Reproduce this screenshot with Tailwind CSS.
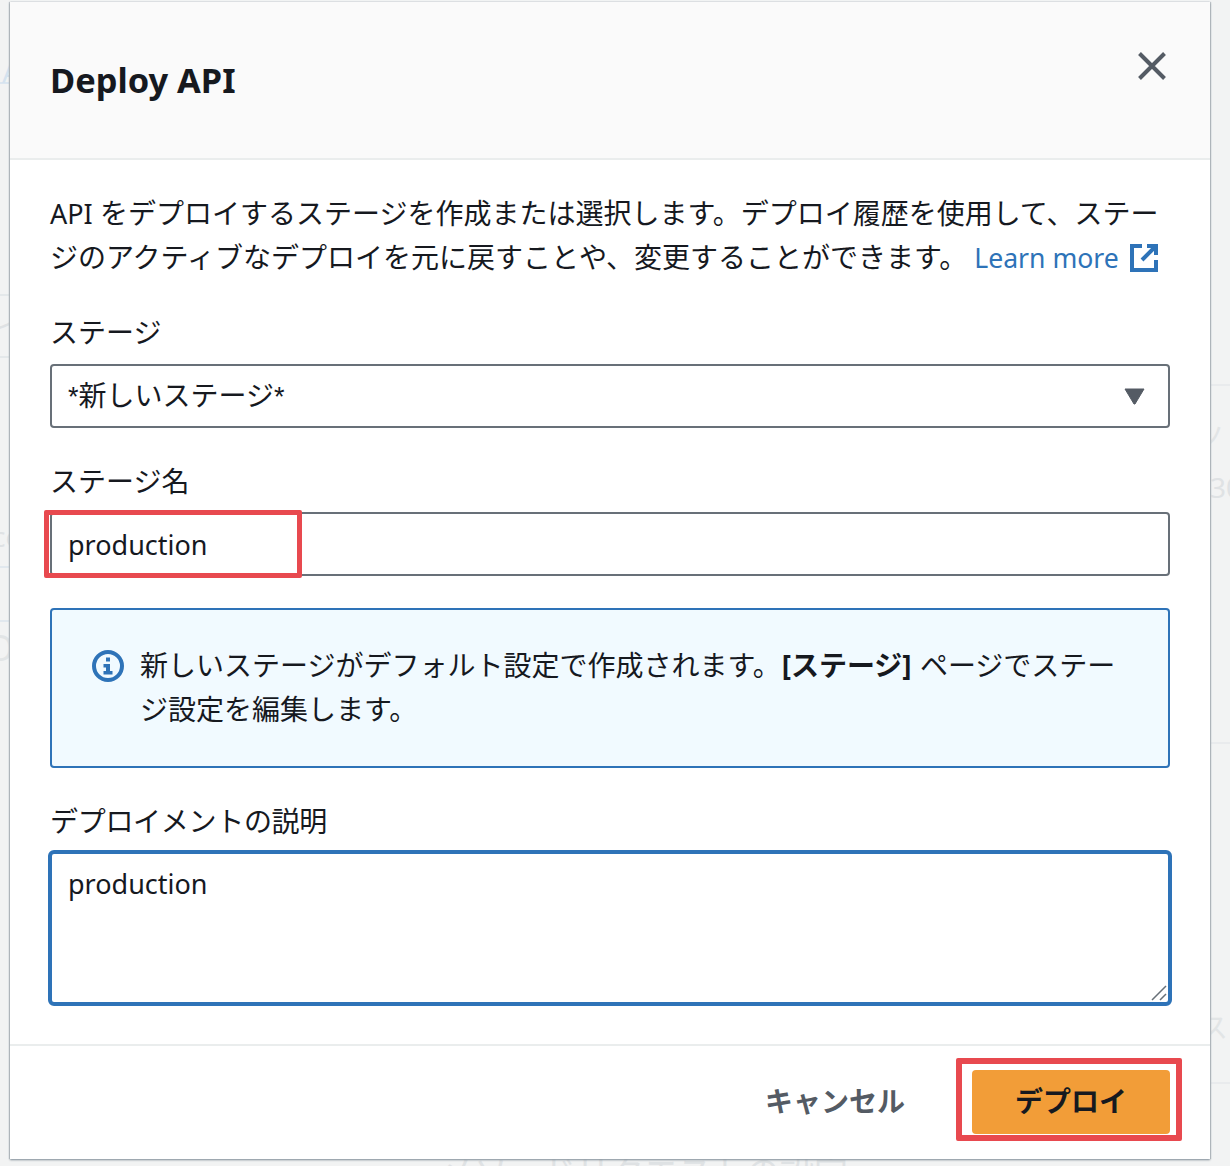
<!DOCTYPE html>
<html lang="ja">
<head>
  <meta charset="UTF-8">
  <title>Deploy API</title>
  <script src="https://cdn.jsdelivr.net/npm/@tailwindcss/browser@4"></script>
</head>
<body class="relative w-[1230px] h-[1166px] overflow-hidden bg-[#f2f3f3] font-['Noto_Sans','Noto_Sans_CJK_JP',sans-serif] text-[28px] leading-[44px] text-[#16191f]">

  <!-- faint page behind the modal -->
  <div class="absolute left-0 top-[294px] w-[10px] h-[2px] bg-[#e4e8ea]"></div>
  <div class="absolute left-0 top-[356px] w-[10px] h-[2px] bg-[#e4e8ea]"></div>
  <div class="absolute left-0 top-[566px] w-[10px] h-[2px] bg-[#e1e8ee]"></div>
  <div class="absolute left-0 top-[620px] w-[10px] h-[2px] bg-[#e1e8ee]"></div>
  <div class="absolute left-0 top-[82px] w-[10px] h-[2px] bg-[#dbe6f0]"></div>
  <div class="absolute left-[1210px] top-[384px] w-[20px] h-[2px] bg-[#e9ebed]"></div>
  <div class="absolute left-[1210px] top-[742px] w-[20px] h-[2px] bg-[#e9ebed]"></div>
  <div class="absolute left-[1210px] top-[1082px] w-[20px] h-[2px] bg-[#e9ebed]"></div>
  <div class="absolute left-[2px] top-[50px] text-[#d5e3ef]">A</div>
  <div class="absolute left-[-4px] top-[304px] text-[#dfe2e4]">イ</div>
  <div class="absolute left-[-8px] top-[514px] text-[#dfe2e4]">co</div>
  <div class="absolute left-[-14px] top-[626px] text-[36px] text-[#e2e5e6]">O</div>
  <div class="absolute left-[1198px] top-[415px] text-[#e2e5e6]">ノ</div>
  <div class="absolute left-[1210px] top-[465px] text-[#dfe2e4]">30</div>
  <div class="absolute left-[1200px] top-[1005px] text-[#e2e5e6]">ス</div>
  <div class="absolute left-[440px] top-[1150px] text-[34px] text-[#dfe2e4] whitespace-nowrap">メソッドリクエストの設定</div>

  <!-- modal -->
  <div class="absolute left-[10px] top-[2px] w-[1200px] h-[1157px] flex flex-col bg-white shadow-[0_1px_2px_#7f8c96,-1px_0_1px_#c5c9cc,1px_0_1px_#c5c9cc]">
    <header class="h-[158px] shrink-0 flex justify-between bg-[#fafafa] border-b-2 border-[#eaeded] pl-[40px] pr-[40px]">
      <h1 class="mt-[56px] text-[34.400px] leading-[44px] font-bold">Deploy API</h1>
      <button class="mt-[44px] w-[36px] h-[36px] text-[#545b64]">
        <svg viewBox="0 0 28 28" class="w-[28px] h-[28px] ml-[4px] mt-[4px]" fill="none" stroke="currentColor" stroke-width="4"><path d="M1.500 1.500 26.500 26.500M26.500 1.500 1.500 26.500"/></svg>
      </button>
    </header>

    <main class="flex-1 px-[40px] pt-[31px]">
      <p class="whitespace-nowrap"><span class="text-[27px] leading-none">API</span> をデプロイするステージを作成または選択します。デプロイ履歴を使用して、ステー<br>ジのアクティブなデプロイを元に戻すことや、変更することができます。<a class="text-[26.600px] leading-none text-[#2e73b8]"> Learn more<svg viewBox="0 0 28 28" class="inline-block w-[28px] h-[28px] ml-[11px] align-[-4px]" fill="none" stroke="currentColor" stroke-width="4"><path d="M12 2H2V26H26V16M17 2H26V11M26 2 12 16"/></svg></a>
      </p>

      <label class="block mt-[31px] h-[44px]">ステージ</label>
      <div class="mt-[10px] h-[64px] flex items-center justify-between rounded-[4px] border-2 border-[#687078] pl-[16px] pr-[23px]">
        <span class="pb-[2px]"><span class="font-['Liberation_Sans'] text-[27px] leading-none">*</span>新しいステージ<span class="font-['Liberation_Sans'] text-[27px] leading-none">*</span></span>
        <svg viewBox="0 0 21 17" class="w-[21px] h-[17px]" fill="#545b64"><path d="M1 1H20L11 16H10Z" stroke="#545b64" stroke-linejoin="round"/></svg>
      </div>

      <label class="block mt-[31px] h-[44px]">ステージ名</label>
      <div class="mt-[9px] h-[64px] flex items-center rounded-[4px] border-2 border-[#687078] pl-[16px] pt-[2px] text-[27px]">production</div>

      <div class="mt-[32px] h-[160px] flex rounded-[4px] border-2 border-[#2e73b8] bg-[#f1faff] pl-[40px] pt-[33px]">
        <svg viewBox="0 0 32 32" class="w-[32px] h-[32px] mt-[7px] mr-[16px] shrink-0 text-[#2e73b8]" fill="none" stroke="currentColor"><circle cx="16" cy="16" r="14" stroke-width="4"/><path d="M14 7.500h4v4h-4zM11.500 14h6.500v7H20.500v3.500h-9V21H14v-3.500h-2.500z" fill="currentColor" stroke="none"/></svg>
        <p class="whitespace-nowrap">新しいステージがデフォルト設定で作成されます。<b class="px-[1px]">[ステージ]</b> ページでステー<br>ジ設定を編集します。</p>
      </div>

      <label class="block mt-[31px] h-[44px] tracking-[-0.3px]">デプロイメントの説明</label>
      <div class="relative mt-[7px] mx-[-2px] h-[156px] rounded-[6px] border-4 border-[#2e73b8] pl-[16px] pt-[8px] text-[27px]">production
        <svg viewBox="0 0 16 16" class="absolute right-[1px] bottom-[1px] w-[16px] h-[16px]" fill="none" stroke="#687078" stroke-width="1.500"><path d="M1 15 15 1M9 15 15 9"/></svg>
      </div>
    </main>

    <footer class="h-[115px] shrink-0 flex items-start justify-end border-t-2 border-[#eaeded] pr-[40px] pt-[24px]">
      <button class="mr-[67px] h-[62px] font-bold text-[#545b64]">キャンセル</button>
      <button class="w-[198px] h-[64px] pb-[2px] rounded-[4px] bg-[#f29d38] font-bold">デプロイ</button>
    </footer>
  </div>

  <!-- red annotation boxes -->
  <div class="absolute left-[44px] top-[510px] w-[258px] h-[68px] rounded-[2px] border-[5px] border-[#e8494f]"></div>
  <div class="absolute left-[956px] top-[1058px] w-[226px] h-[83px] rounded-[2px] border-[6px] border-[#e8494f]"></div>
</body>
</html>
